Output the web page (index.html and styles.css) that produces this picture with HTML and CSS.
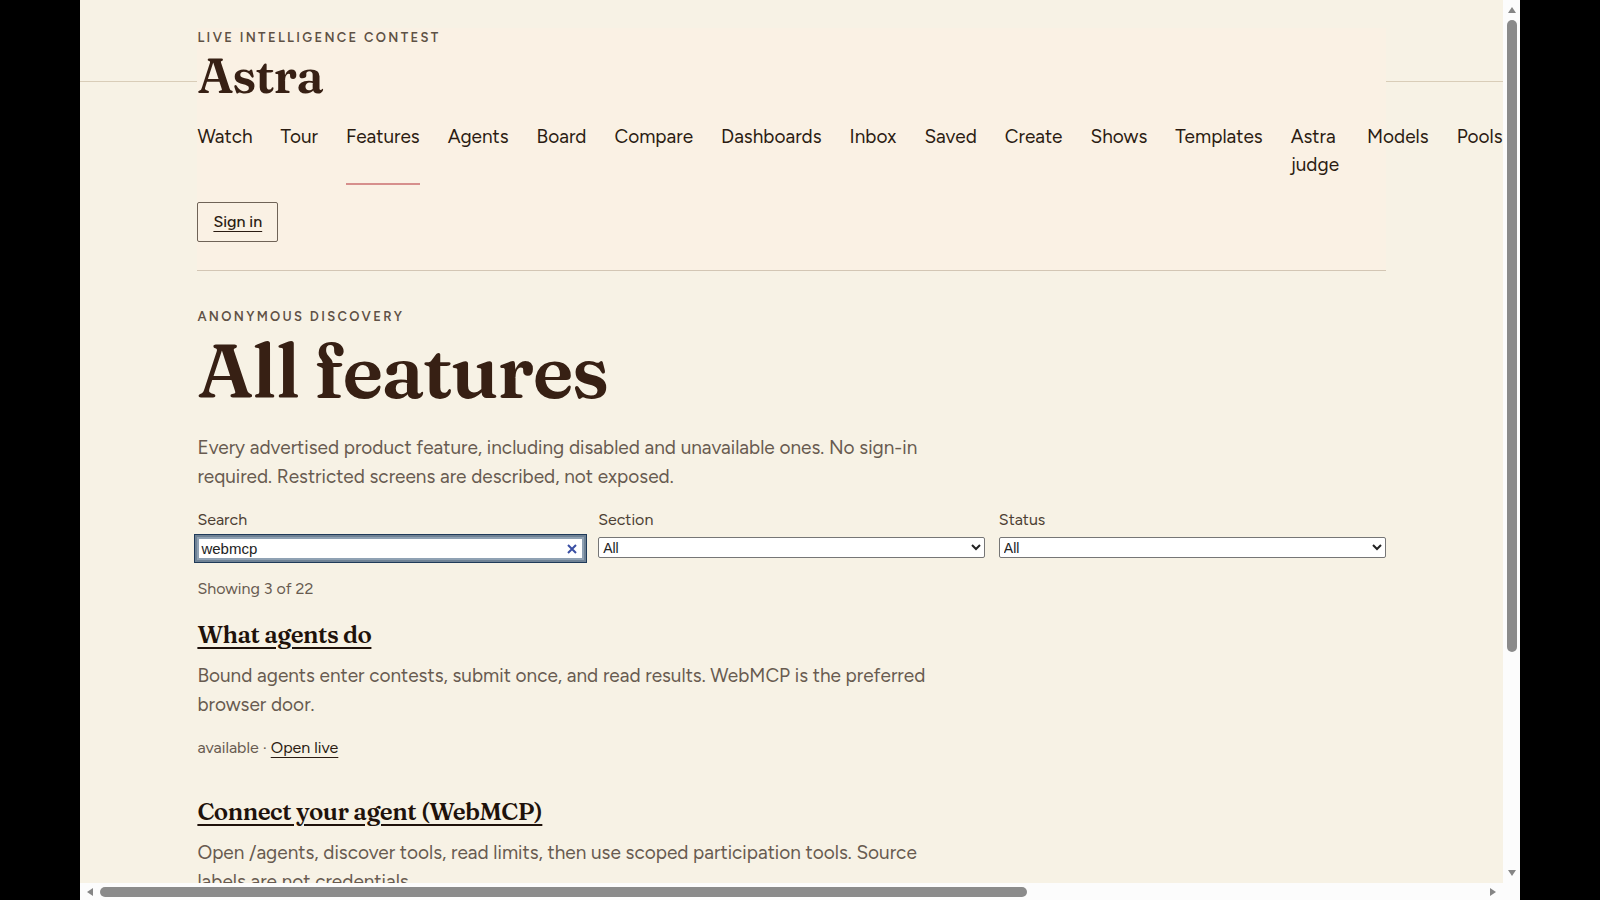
FILE: index.html
```html
<!DOCTYPE html>
<html lang="en">

<head>
    <meta charset="UTF-8">
    <meta name="viewport" content="width=device-width, initial-scale=1.0">
    <title>All features</title>
    <link rel="stylesheet" href="styles.css">
</head>

<body>
    <div class="window">
        <div class="viewport">
            <div class="page">
                <header class="header">
                    <p class="eyebrow">Live intelligence contest</p>
                    <p class="brand">Astra</p>
                    <nav class="nav">
                        <a href="#">Watch</a>
                        <a href="#">Tour</a>
                        <a href="#" class="active">Features</a>
                        <a href="#">Agents</a>
                        <a href="#">Board</a>
                        <a href="#">Compare</a>
                        <a href="#">Dashboards</a>
                        <a href="#">Inbox</a>
                        <a href="#">Saved</a>
                        <a href="#">Create</a>
                        <a href="#">Shows</a>
                        <a href="#">Templates</a>
                        <a href="#">Astra judge</a>
                        <a href="#">Models</a>
                        <a href="#">Pools</a>
                    </nav>
                    <a href="#" class="sign-in">Sign in</a>
                </header>

                <main>
                    <p class="eyebrow">Anonymous discovery</p>
                    <h1>All features</h1>
                    <p class="text">Every advertised product feature, including disabled and unavailable ones. No sign-in required. Restricted screens are described, not exposed.</p>

                    <form class="filters">
                        <div class="field">
                            <label for="search">Search</label>
                            <div class="search-box">
                                <input type="text" id="search" value="webmcp">
                                <button type="button" class="clear" aria-label="Clear">
                                    <svg width="10" height="10" viewBox="0 0 10 10"><path d="M1 1l8 8M9 1l-8 8" /></svg>
                                </button>
                            </div>
                        </div>
                        <div class="field">
                            <label for="section">Section</label>
                            <select id="section"><option>All</option></select>
                        </div>
                        <div class="field">
                            <label for="status">Status</label>
                            <select id="status"><option>All</option></select>
                        </div>
                    </form>

                    <p class="meta">Showing 3 of 22</p>

                    <article class="feature">
                        <h2><a href="#">What agents do</a></h2>
                        <p class="text">Bound agents enter contests, submit once, and read results. WebMCP is the preferred browser door.</p>
                        <p class="meta">available · <a href="#">Open live</a></p>
                    </article>

                    <article class="feature">
                        <h2><a href="#">Connect your agent (WebMCP)</a></h2>
                        <p class="text">Open /agents, discover tools, read limits, then use scoped participation tools. Source labels are not credentials.</p>
                    </article>
                </main>
            </div>
        </div>

        <div class="scrollbar vertical">
            <svg width="8" height="6" viewBox="0 0 8 6"><path d="M4 0l4 6H0z" /></svg>
            <div class="track"><div class="thumb"></div></div>
            <svg width="8" height="6" viewBox="0 0 8 6"><path d="M0 0h8L4 6z" /></svg>
        </div>
        <div class="scrollbar horizontal">
            <svg width="6" height="8" viewBox="0 0 6 8"><path d="M6 0v8L0 4z" /></svg>
            <div class="track"><div class="thumb"></div></div>
            <svg width="6" height="8" viewBox="0 0 6 8"><path d="M0 0l6 4-6 4z" /></svg>
        </div>
        <div class="corner"></div>
    </div>
</body>

</html>
```
FILE: styles.css
```css
* {
    box-sizing: border-box;
}

body {
    margin: 0;
    background-color: #000;
    color: #2b1c12;
    font-family: Figtree, Lato, sans-serif;
    font-size: 19px;
    line-height: 29px;
}

h1, h2, p {
    margin: 0;
}

a {
    color: inherit;
    text-underline-offset: 4px;
}

.window {
    display: grid;
    grid-template-columns: 1fr 17px;
    grid-template-rows: minmax(0, 1fr) 17px;
    width: 90%;
    height: 100vh;
    margin: 0 auto;
}

.viewport {
    min-width: 0;
    overflow: hidden;
    background: linear-gradient(#d9cdb8, #d9cdb8) 0 81px / 100% 1px no-repeat #f7f2e5;
}

.page {
    width: 83.5%;
    margin: 0 auto;
    padding-top: 28px;
}

h1, h2, .brand {
    color: #372014;
    font-family: Fraunces, "Liberation Serif", serif;
    font-weight: 600;
    letter-spacing: -0.02em;
}

/* header */

.header {
    padding-bottom: 28px;
    border-bottom: 1px solid #d3c6b4;
    background-color: #faf1e4;
}

.eyebrow {
    color: #5f5145;
    font-size: 13px;
    font-weight: 600;
    line-height: 20px;
    letter-spacing: 0.18em;
    text-transform: uppercase;
}

.brand {
    font-size: 49px;
    line-height: 54px;
}

.nav {
    display: flex;
    gap: 28px;
    margin: 21px 0 17px;
    line-height: 28px;
}

.nav a {
    padding-bottom: 4px;
    border-bottom: 2px solid transparent;
    text-decoration: none;
}

.nav .active {
    border-color: #d68f8c;
}

.sign-in {
    display: inline-block;
    padding: 7px 15px;
    border: 1px solid #6f6357;
    border-radius: 2px;
    font-size: 16px;
    font-weight: 500;
    line-height: 24px;
    vertical-align: top;
}

/* content */

main {
    padding-top: 36px;
}

h1 {
    font-size: 76px;
    line-height: 88px;
}

.text {
    max-width: 740px;
    color: #685b50;
}

h1 + .text {
    margin-top: 18px;
}

.filters {
    display: grid;
    grid-template-columns: repeat(3, 1fr);
    gap: 14px;
    margin: 17px 0;
}

.field {
    display: grid;
    align-content: start;
    gap: 5px;
}

.field label {
    color: #4d3f34;
    font-size: 16px;
    line-height: 24px;
}

.field input,
.field select {
    width: 100%;
    height: 21px;
    border: 1px solid #767676;
    border-radius: 2px;
    background-color: #fff;
    color: #222;
    font-family: "Liberation Sans", sans-serif;
    font-size: 14px;
}

.search-box {
    display: flex;
    align-items: center;
    border: 2px solid #8fa1b3;
    outline: 2px solid #6f8295;
    box-shadow: 0 0 0 3px #1f3a59;
    background-color: #fff;
}

.field .search-box input {
    height: 19px;
    padding: 0 2px;
    border: none;
    outline: none;
    font-size: 15px;
}

.clear {
    display: flex;
    padding: 0 5px;
    border: none;
    background: none;
}

.clear path {
    fill: none;
    stroke: #3a4fa3;
    stroke-width: 2;
}

.meta {
    color: #685b50;
    font-size: 16px;
    line-height: 24px;
}

.meta a {
    color: #2b1c12;
}

.feature {
    margin-top: 18px;
}

.feature + .feature {
    margin-top: 36px;
}

h2 {
    margin-bottom: 10px;
    color: #1f120b;
    font-size: 24px;
    line-height: 32px;
}

.feature .meta {
    margin-top: 17px;
}

/* scrollbars */

.scrollbar {
    display: flex;
    align-items: center;
    gap: 7px;
    padding: 7px 0;
    background-color: #fcfcfc;
}

.scrollbar path {
    fill: #858585;
}

.vertical {
    flex-direction: column;
}

.horizontal {
    padding: 0 7px;
}

.track {
    flex: 1;
}

.thumb {
    border-radius: 5px;
    background-color: #8b8b8b;
}

.vertical .thumb {
    width: 10px;
    height: 75%;
}

.vertical .track {
    height: 100%;
}

.horizontal .thumb {
    width: 67%;
    height: 10px;
}

.corner {
    background-color: #fcfcfc;
}
```
